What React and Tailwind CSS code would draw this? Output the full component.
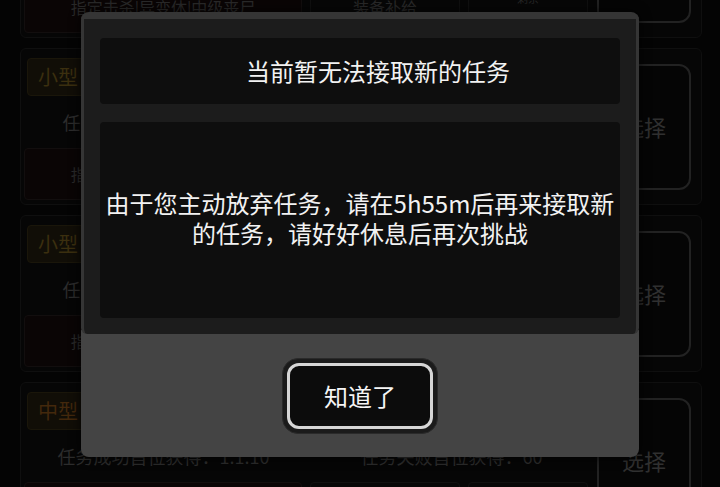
import React from 'react';

const CARDS = [
  { tag: '小型', tagCls: 'text-[#3b2f0f]', left: '任务成功首位获得：1.1.6', mid: '任务失败首位获得：30', box: '指定击杀|异变体|中级丧尸', supply: '装备补给', time: ['剩余', '01:54'] },
  { tag: '小型', tagCls: 'text-[#3b2f0f]', left: '任务成功首位获得：1.1.8', mid: '任务失败首位获得：40', box: '指定击杀|异变体|小型丧尸', supply: '装备补给', time: ['剩余', '02:10'] },
  { tag: '小型', tagCls: 'text-[#3b2f0f]', left: '任务成功首位获得：1.1.8', mid: '任务失败首位获得：40', box: '指定击杀|异变体|小型丧尸', supply: '装备补给', time: ['剩余', '02:32'] },
  { tag: '中型', tagCls: 'text-[#43280c]', left: '任务成功首位获得：1.1.10', mid: '任务失败首位获得：60', box: '指定击杀|异变体|中型丧尸', supply: '装备补给', time: ['剩余', '03:05'] },
];

function TaskCard({ card }) {
  return (
    <div className="h-[157px] shrink-0 flex border border-[#0f0f0f] rounded-md bg-[#060606]">
      {/* left / middle content */}
      <div className="w-[578px] flex flex-col pt-[9px]">
        <div className="h-[38px] flex pl-[6px]">
          <div className={`w-[62px] h-[38px] rounded bg-[#110e07] border border-[#1a160a] flex items-center justify-center text-[20px] ${card.tagCls}`}>
            {card.tag}
          </div>
        </div>
        <div className="h-[52px] flex items-center text-[18px] text-[#2c2c2c]">
          <div className="w-[285px] text-center">{card.left}</div>
          <div className="flex-1 text-center">{card.mid}</div>
        </div>
        <div className="h-[52px] flex gap-[8px] pl-[3px]">
          <div className="w-[278px] rounded bg-[#0a0505] border border-[#120e0e] flex items-center justify-center text-[16px] text-[#292929]">
            {card.box}
          </div>
          <div className="w-[150px] rounded bg-[#070707] border border-[#101010] flex items-center justify-center text-[16px] text-[#292929]">
            {card.supply}
          </div>
          <div className="w-[120px] rounded bg-[#070707] border border-[#101010] flex flex-col items-center justify-center gap-[2px] text-[11px] leading-[16px] text-[#252525]">
            <span>{card.time[0]}</span>
            <span>{card.time[1]}</span>
          </div>
        </div>
      </div>
      {/* select button */}
      <div className="flex-1 flex items-center pr-[10px]">
        <div className="w-[94px] h-[126px] rounded-xl border-2 border-[#222] bg-[#050505] flex items-center justify-center text-[22px] text-[#303030]">
          选择
        </div>
      </div>
    </div>
  );
}

export default function App() {
  return (
    <div
      className="relative w-[720px] h-[487px] overflow-hidden bg-[#040404]"
      style={{ fontFamily: '"Noto Sans CJK SC", "Noto Sans", sans-serif' }}
    >
      {/* dimmed task list behind the dialog */}
      <div className="flex flex-col gap-[10px] pl-[20px] pr-[18px] -mt-[119px]">
        {CARDS.map((c, i) => (
          <TaskCard key={i} card={c} />
        ))}
      </div>

      {/* modal */}
      <div className="absolute left-[81px] top-[12px] w-[558px] h-[445px] rounded-lg overflow-hidden flex flex-col shadow-[0_0_12px_rgba(0,0,0,0.8)]">
        <div className="h-[322px] bg-[#1c1c1c] border-t-[7px] border-x-[3px] border-[#353535] rounded-b-md px-[16px] pt-[19px] flex flex-col gap-[18px] relative z-10">
          <div className="h-[66px] rounded bg-[#0e0e0e] flex items-center justify-center pl-[36px] text-[24px] text-[#f2f2f2]">
            当前暂无法接取新的任务
          </div>
          <div className="h-[196px] rounded bg-[#0e0e0e] flex items-center justify-center px-[4px] pb-[4px] text-center text-[24px] leading-[30px] text-[#f2f2f2]">
            由于您主动放弃任务，请在5h55m后再来接取新的任务，请好好休息后再次挑战
          </div>
        </div>
        <div className="flex-1 bg-[#444] -mt-[4px] pt-[4px] flex items-center justify-center">
          <button
            type="button"
            className="w-[156px] h-[76px] rounded-[16px] bg-[#1b1b1b] p-[4px] border border-[#2a2a2a]"
          >
            <div className="w-full h-full rounded-[12px] border-[3px] border-[#d6d6d6] bg-[#0c0c0c] flex items-center justify-center text-[24px] text-[#f5f5f5]">
              知道了
            </div>
          </button>
        </div>
      </div>
    </div>
  );
}
